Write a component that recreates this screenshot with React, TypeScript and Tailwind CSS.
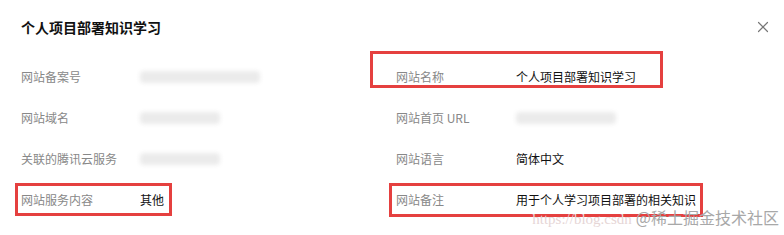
import { X } from "lucide-react"

type Item = {
  label: string
  value?: string
  blur?: number
  box?: string
}

const left: Item[] = [
  { label: "网站备案号", blur: 120 },
  { label: "网站域名", blur: 80 },
  { label: "关联的腾讯云服务", blur: 80 },
  { label: "网站服务内容", value: "其他", box: "left-[-6px] top-[4px] w-[157px] h-[33px]" },
]

const right: Item[] = [
  { label: "网站名称", value: "个人项目部署知识学习", box: "left-[-26px] top-[-5px] w-[293px] h-[37px]" },
  { label: "网站首页 URL", blur: 100 },
  { label: "网站语言", value: "简体中文" },
  { label: "网站备注", value: "用于个人学习项目部署的相关知识", box: "left-[-7px] top-[4px] w-[314px] h-[34px]" },
]

const Row = ({ item, labelWidth }: { item: Item; labelWidth: string }) => (
  <div className="relative flex h-[41px] items-center text-[12px]">
    <span className={`${labelWidth} shrink-0 text-[#888888]`}>{item.label}</span>
    {item.value && <span className="text-[#111111]">{item.value}</span>}
    {item.blur && (
      <span
        className="h-[12px] rounded-sm bg-[#ebebeb] blur-[2px]"
        style={{ width: item.blur }}
      />
    )}
    {item.box && (
      <span className={`pointer-events-none absolute border-[3px] border-[#e5403f] ${item.box}`} />
    )}
  </div>
)

export default function App() {
  return (
    <div
      className="relative h-[235px] w-[784px] overflow-hidden bg-white px-[21px] pt-[17px]"
      style={{ fontFamily: '"Noto Sans CJK SC", "Noto Sans", sans-serif' }}
    >
      <div className="flex h-[20px] items-center justify-between">
        <h1 className="text-[14px] font-bold text-[#111111]">个人项目部署知识学习</h1>
        <X className="mr-[-9px] h-[18px] w-[18px] text-[#777777]" strokeWidth={1.6} />
      </div>

      <div className="mt-[19px] grid grid-cols-[375px_1fr]">
        <div className="flex flex-col">
          {left.map((it) => (
            <Row key={it.label} item={it} labelWidth="w-[119px]" />
          ))}
        </div>
        <div className="flex flex-col">
          {right.map((it) => (
            <Row key={it.label} item={it} labelWidth="w-[120px]" />
          ))}
        </div>
      </div>

      <div className="pointer-events-none absolute bottom-[5px] right-[5px] flex items-baseline gap-[4px]">
        <span className="text-[15px] text-[#e6d6d6]" style={{ fontFamily: '"Liberation Serif", serif' }}>
          https://blog.csdn
        </span>
        <span
          className="text-[16px] text-[#a8a8a8]"
          style={{ fontFamily: '"Noto Sans CJK SC", serif' }}
        >
          @稀土掘金技术社区
        </span>
      </div>
    </div>
  )
}
